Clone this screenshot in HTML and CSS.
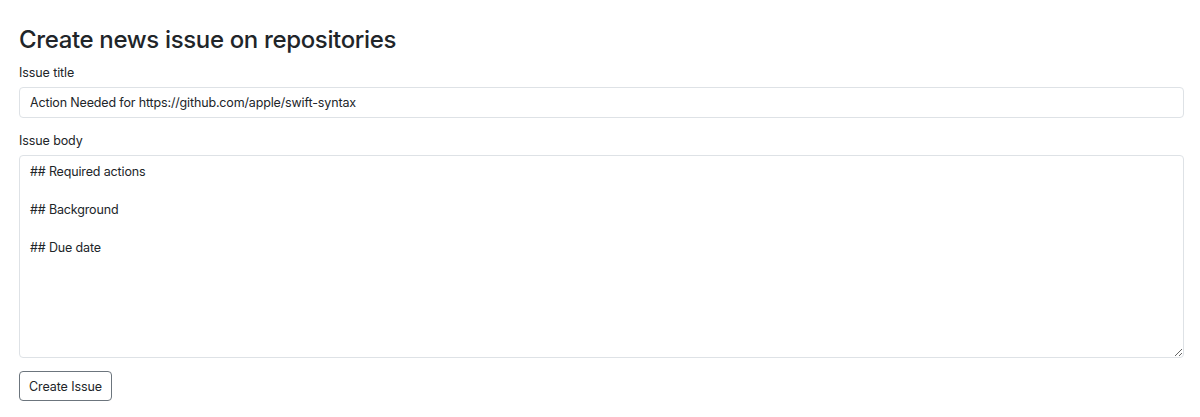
FILE: index.html
```html
<!DOCTYPE html>
<html>
<head>
<meta charset="utf-8">
<link rel="stylesheet" href="styles.css">
</head>
<body>
<main class="page">
  <h1 class="title">Create news issue on repositories</h1>
  <form class="form">
    <div class="field">
      <label class="label" for="t">Issue title</label>
      <input class="input" id="t" type="text" value="Action Needed for https://github.com/apple/swift-syntax">
    </div>
    <div class="field">
      <label class="label" for="b">Issue body</label>
      <textarea class="textarea" id="b">## Required actions

## Background

## Due date</textarea>
    </div>
    <div class="actions">
      <button class="btn" type="button">Create Issue</button>
    </div>
  </form>
</main>
</body>
</html>
```

FILE: styles.css
```css
html, body {
  margin: 0;
  padding: 0;
  background: #fff;
}
body {
  font-family: Inter, "Liberation Sans", Arial, sans-serif;
  color: #212529;
}
.page {
  padding: 25px 16px 0 19px;
}
.title {
  margin: 0 0 8px;
  font-size: 24px;
  font-weight: 500;
  line-height: 30px;
  color: #212529;
  letter-spacing: -0.35px;
}
.form {
  display: flex;
  flex-direction: column;
}
.field {
  display: flex;
  flex-direction: column;
  margin-bottom: 13px;
}
.label {
  font-size: 12.5px;
  line-height: 19px;
  margin-bottom: 5px;
  letter-spacing: -0.1px;
}
.input, .textarea {
  font-family: inherit;
  font-size: 12.5px;
  color: #212529;
  border: 1px solid #dee2e6;
  border-radius: 4px;
  background: #fff;
  box-sizing: border-box;
  width: 100%;
  margin: 0;
  padding: 5px 10px;
  line-height: 19px;
  letter-spacing: -0.15px;
}
.input {
  height: 31px;
}
.textarea {
  height: 203px;
  resize: vertical;
  padding-top: 6px;
}
.actions {
  display: flex;
}
.btn {
  font-family: inherit;
  font-size: 12.5px;
  color: #212529;
  background: #fff;
  border: 1px solid #6c757d;
  border-radius: 4px;
  height: 30px;
  width: 93px;
  padding: 0;
  letter-spacing: -0.1px;
}
```
